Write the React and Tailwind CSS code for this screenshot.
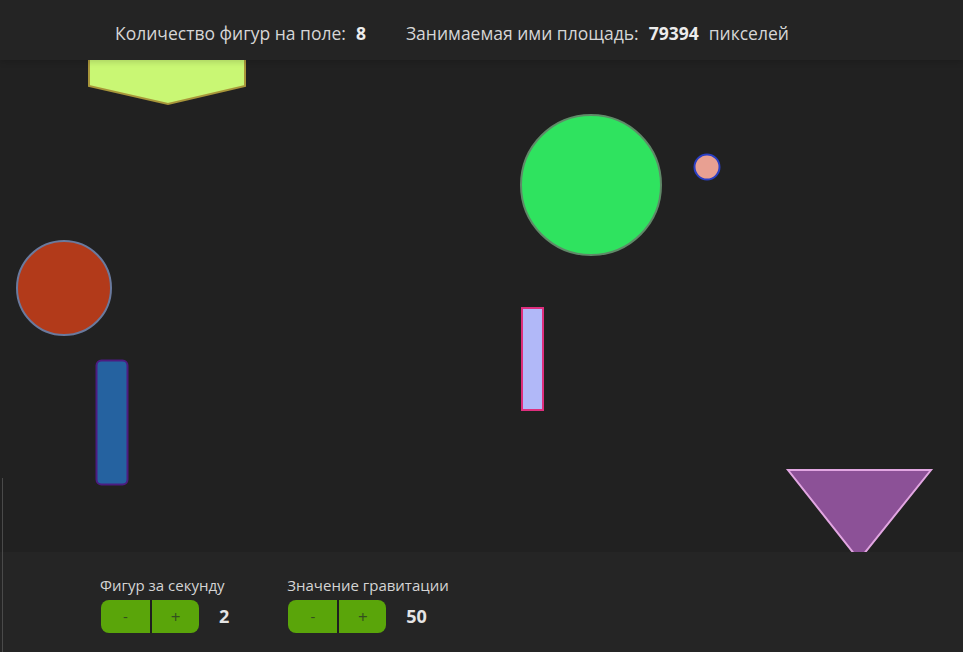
import React from 'react';

const font = { fontFamily: '"Open Sans", "Noto Sans", sans-serif' };

function Counter({ label, value }) {
    return (
        <div className="flex flex-col">
            <span className="text-[15px] leading-[18px] text-[#d4d4d4] mb-[6px] -ml-px">{label}</span>
            <div className="flex items-center">
                <div className="flex h-[33px] rounded-[8px] overflow-hidden bg-[#5aa50a]">
                    <button className="w-[49px] h-full text-[15px] text-[#34501f] flex items-center justify-center">-</button>
                    <div className="w-[2px] h-full bg-[#1f1f1f]"></div>
                    <button className="w-[47px] h-full text-[17px] text-[#34501f] flex items-center justify-center">+</button>
                </div>
                <span className="ml-[20px] text-[18px] font-bold text-[#e4e4e4]">{value}</span>
            </div>
        </div>
    );
}

export default function App() {
    return (
        <div className="w-[963px] h-[652px] flex flex-col bg-[#212121] overflow-hidden relative" style={font}>
            {/* Stats header */}
            <header className="h-[60px] shrink-0 bg-[#242424] flex items-center pt-[6px] pl-[115px] text-[17.5px] text-[#d6d6d6] shadow-[0_2px_6px_rgba(0,0,0,0.15)] z-10">
                <span>Количество фигур на поле:</span>
                <span className="ml-[10px] font-bold text-[#ececec]">8</span>
                <span className="ml-[40px]">Занимаемая ими площадь:</span>
                <span className="ml-[10px] font-bold text-[#ececec]">79394</span>
                <span className="ml-[10px]">пикселей</span>
            </header>

            {/* Field */}
            <div className="h-[492px] shrink-0 bg-[#212121]">
                <svg width="963" height="492" viewBox="0 60 963 492">
                    <polygon points="89,56 245,56 245,86 168,104 89,86" fill="#c9f774" stroke="#a8963a" strokeWidth="2" />
                    <circle cx="591" cy="185" r="70" fill="#2fe35f" stroke="#5f8a68" strokeWidth="2" />
                    <circle cx="707" cy="167" r="12.5" fill="#e8a092" stroke="#2a3fc4" strokeWidth="2" />
                    <circle cx="64" cy="288" r="47" fill="#b23a1a" stroke="#6a7a9e" strokeWidth="2" />
                    <rect x="96.5" y="360.5" width="31" height="124" rx="5" fill="#2562a0" stroke="#4d1c80" strokeWidth="2" />
                    <rect x="522" y="308" width="21" height="102" fill="#b1b8f8" stroke="#de2f7d" strokeWidth="2" />
                    <polygon points="788,470 931,470 859,560" fill="#8c5197" stroke="#e2a6e2" strokeWidth="2" />
                </svg>
            </div>

            {/* Controls */}
            <footer className="flex-1 bg-[#252525] flex items-start pt-[24px] pl-[101px] gap-[59px]">
                <Counter label="Фигур за секунду" value="2" />
                <Counter label="Значение гравитации" value="50" />
            </footer>

            <div className="absolute left-[2px] top-[478px] w-px h-[174px] bg-[#4a4a4a]"></div>
        </div>
    );
}
